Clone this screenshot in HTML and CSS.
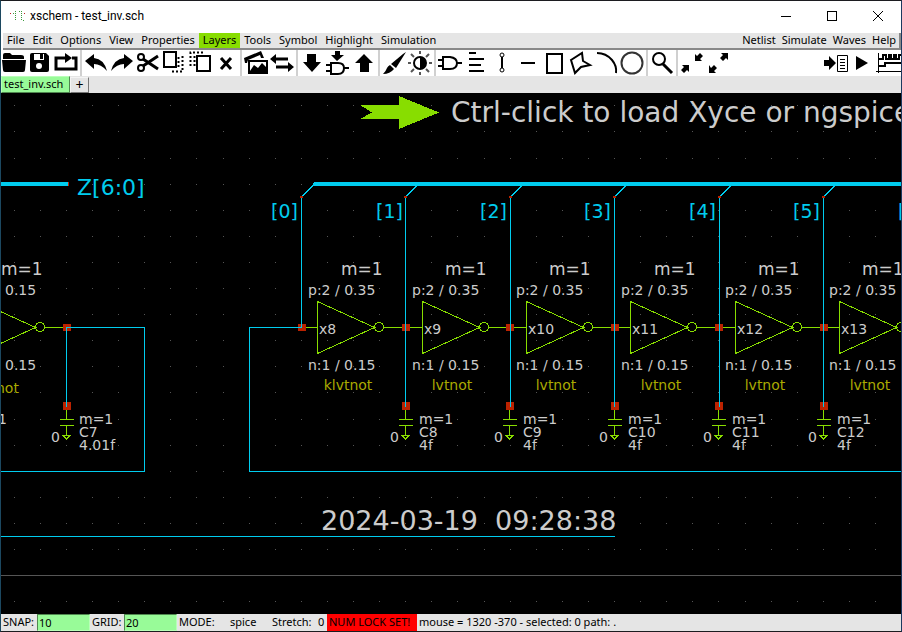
FILE: index.html
```
<!DOCTYPE html>
<html lang="en">
<head>
<meta charset="utf-8">
<title>xschem - test_inv.sch</title>
<link rel="stylesheet" href="styles.css">
</head>
<body>
<div class="window">
  <header class="titlebar">
    <svg class="app-icon" width="18" height="12" viewBox="0 0 18 12" aria-hidden="true">
      <path d="M6.500 1V11M12.500 1V11M4 3.500H7M10 1.500H13M14 10.500H16" class="app-dots"/>
      <path d="M1 3.500H2M15 3.500H16" class="app-pins"/>
    </svg>
    <h1 class="title">xschem - test_inv.sch</h1>
    <div class="window-buttons">
      <button type="button" aria-label="Minimize"><svg width="12" height="12"><path d="M1 6.500H11"/></svg></button>
      <button type="button" aria-label="Maximize"><svg width="12" height="12"><path d="M1.500 1.500H10.500V10.500H1.500Z"/></svg></button>
      <button type="button" aria-label="Close"><svg width="12" height="12"><path class="smooth" d="M1 1L11 11M11 1L1 11"/></svg></button>
    </div>
  </header>

  <nav class="menubar">
    <button type="button">File</button>
    <button type="button">Edit</button>
    <button type="button">Options</button>
    <button type="button">View</button>
    <button type="button">Properties</button>
    <button type="button" class="layers">Layers</button>
    <button type="button">Tools</button>
    <button type="button">Symbol</button>
    <button type="button">Highlight</button>
    <button type="button">Simulation</button>
    <div class="menu-right">
      <button type="button">Netlist</button>
      <button type="button">Simulate</button>
      <button type="button">Waves</button>
      <button type="button">Help</button>
    </div>
  </nav>

  <div class="toolbar">
    <button type="button" aria-label="Open"><svg viewBox="0 0 26 26"><path class="f" d="M2 9V5Q2 3 4 3H9L11 5H20Q23 5 23 7V9ZM1 10H25L24 20Q24 22 22 22H4Q2 22 2 20Z"/></svg></button>
    <button type="button" aria-label="Save"><svg viewBox="0 0 26 26"><path class="f" d="M5 3H19L22 6V20Q22 22 20 22H5Q3 22 3 20V5Q3 3 5 3Z"/><path class="w" d="M7 4H17V10H7Z"/><path class="f" d="M13 4H16V9H13Z"/><circle class="w" cx="12" cy="16" r="3"/></svg></button>
    <button type="button" aria-label="Reload"><svg viewBox="0 0 26 26"><path class="s3" d="M14 8H3V19H23V8H19"/><path class="f" d="M12 3L19 8L12 13Z"/></svg></button>
    <span class="sep"></span>
    <button type="button" aria-label="Undo"><svg viewBox="0 0 26 26"><path class="f" d="M2 11L11 4V8Q21 9 24 21Q18 14 11 14V19Z"/></svg></button>
    <button type="button" aria-label="Redo"><svg viewBox="0 0 26 26"><path class="f" d="M24 11L15 4V8Q5 9 2 21Q8 14 15 14V19Z"/></svg></button>
    <button type="button" aria-label="Cut"><svg viewBox="0 0 26 26"><circle class="s2" cx="6" cy="7" r="3"/><circle class="s2" cx="6" cy="18" r="3"/><path class="s3" d="M8 9L23 19M8 16L23 6"/></svg></button>
    <button type="button" aria-label="Copy"><svg viewBox="0 0 26 26"><path class="s2" d="M3 2H15V17H3Z"/><path class="dots" d="M21.500 6V21.500H9"/><path class="dots" d="M17.500 7V18"/></svg></button>
    <button type="button" aria-label="Paste"><svg viewBox="0 0 26 26"><path class="s2" d="M10 6H23V21H10Z"/><path class="dots" d="M3.500 16V2.500H16"/><path class="dots" d="M7.500 6V17"/></svg></button>
    <button type="button" aria-label="Delete"><svg viewBox="0 0 26 26"><path class="s3" d="M8 8L18 19M18 8L8 19"/></svg></button>
    <span class="sep"></span>
    <button type="button" aria-label="Duplicate view"><svg viewBox="0 0 26 26"><path class="f" d="M1 8L18 1L21 8H18L17 5L5 10L4 13H2Z"/><path class="s2" d="M6 11H24V23H6Z"/><path class="f" d="M7 21L11 15L15 18L19 13L23 17V22H7Z"/></svg></button>
    <button type="button" aria-label="Swap"><svg viewBox="0 0 26 26"><path class="s3" d="M5 9H19M7 17H21"/><path class="f" d="M1 9L7 4V14ZM25 17L19 12V22Z"/></svg></button>
    <span class="sep"></span>
    <button type="button" aria-label="Descend"><svg viewBox="0 0 26 26"><path class="f" d="M8 4H17V12H22L13 22L4 12H8Z"/></svg></button>
    <button type="button" aria-label="Descend symbol"><svg viewBox="0 0 26 26"><path class="f" d="M10 1H15V5H19L12 11L6 5H10Z"/><path class="s2" d="M6 13H13Q19 13 19 18Q19 24 13 24H6ZM1 15H6M1 21H6M19 18H24"/></svg></button>
    <button type="button" aria-label="Ascend"><svg viewBox="0 0 26 26"><path class="f" d="M13 4L22 13H18V22H9V13H4Z"/></svg></button>
    <span class="sep"></span>
    <button type="button" aria-label="Brush"><svg viewBox="0 0 26 26"><path class="f" d="M25 2L15 18L10 14L22 4ZM9 15L13 19Q9 24 2 24Q5 21 6 18Q7 16 9 15Z"/></svg></button>
    <button type="button" aria-label="Toggle colours"><svg viewBox="0 0 26 26"><circle class="s2" cx="13" cy="13" r="6"/><path class="f" d="M13 7A6 6 0 0 1 13 19Z"/><path class="ray" d="M13 1V4M13 22V25M1 13H4M22 13H25M4 4L7 7M19 19L22 22M4 22L7 19M19 7L22 4"/></svg></button>
    <span class="sep"></span>
    <button type="button" aria-label="Insert symbol"><svg viewBox="0 0 26 26"><path class="s2" d="M6 7H13Q20 8 20 13Q20 19 13 19H6ZM1 10H6M1 16H6M20 13H25"/></svg></button>
    <button type="button" aria-label="Insert text"><svg viewBox="0 0 26 26"><path class="s2" d="M6 3H13M6 9H21M6 15H18M6 21H21"/></svg></button>
    <button type="button" aria-label="Insert wire"><svg viewBox="0 0 26 26"><path class="s2" d="M13 7V18"/><circle class="s1" cx="13" cy="5" r="2"/><circle class="s1" cx="13" cy="20" r="2"/></svg></button>
    <button type="button" aria-label="Insert line"><svg viewBox="0 0 26 26"><path class="s2" d="M6 13H20"/></svg></button>
    <button type="button" aria-label="Insert rectangle"><svg viewBox="0 0 26 26"><path class="s2" d="M6 4H21V23H6Z"/></svg></button>
    <button type="button" aria-label="Insert polygon"><svg viewBox="0 0 26 26"><path class="s2" d="M4 10L15 3L16 11L23 15L14 17L8 23Z"/></svg></button>
    <button type="button" aria-label="Insert arc"><svg viewBox="0 0 26 26"><path class="s2" d="M4 3Q13 3 19 10Q24 16 23 23"/></svg></button>
    <button type="button" aria-label="Insert circle"><svg viewBox="0 0 26 26"><circle class="ring" cx="13" cy="13" r="10.500"/></svg></button>
    <span class="sep"></span>
    <button type="button" aria-label="Zoom box"><svg viewBox="0 0 26 26"><circle class="s2" cx="10" cy="9" r="6"/><path class="s3" d="M14 14L23 23"/></svg></button>
    <span class="sep"></span>
    <button type="button" aria-label="Zoom in"><svg viewBox="0 0 26 26"><path class="f" d="M3 15H10V22L8 20L5 23L2 20L5 17ZM16 4V11H23L21 9L24 6L21 3L18 6Z"/></svg></button>
    <button type="button" aria-label="Zoom out"><svg viewBox="0 0 26 26"><path class="f" d="M4 15V23H11L9 21L12 18L9 15L6 18ZM16 3H23V10L21 8L18 11L15 8L18 5Z"/></svg></button>
    <div class="tools-right">
      <button type="button" aria-label="Netlist"><svg viewBox="0 0 26 26"><path class="f" d="M1 10H6V6L13 13L6 20V16H1Z"/><path class="s1" d="M14.500 5.500H24.500V21.500H14.500ZM17 9.500H22M17 12.500H22M17 15.500H22M17 18.500H22"/></svg></button>
      <button type="button" aria-label="Simulate"><svg viewBox="0 0 26 26"><path class="f" d="M7 6L19 13L7 20Z"/></svg></button>
      <button type="button" aria-label="Waves"><svg viewBox="0 0 26 26"><path class="s1" d="M3.500 3V23M1 21.500H26"/><path class="s2" d="M4 9H8V5H11V9H14V5H16V9H19V5H21V9H24V5H26M4 16H10V13H26"/></svg></button>
    </div>
  </div>

  <div class="tabs">
    <button type="button" class="tab active">test_inv.sch</button>
    <button type="button" class="tab add">+</button>
  </div>

  <main class="schematic">
    <svg class="sheet" role="img" aria-label="Schematic test_inv.sch">
      <defs>
        <g id="inverter">
          <path class="sym" d="M-15 26.500H0M.500 .500V52.500L57.500 26.500ZM67 26.500H88"/>
          <circle class="sym" cx="62" cy="26" r="4.500"/>
        </g>
        <g id="pin"><path class="pin" d="M-3 -3H5V4H-3Z"/></g>
        <g id="cap">
          <path class="pin" d="M-3 402H5V410H-3Z"/>
          <path class="sym" d="M.500 410V419M-6 419.500H8M-6 425.500H8M.500 426V435M-3 435.500H4L.500 439Z"/>
          <text class="t14" x="-15" y="442">0</text>
        </g>
        <g id="tap">
          <path class="wire" d="M.500 197V407M1 196.500L12 185.500"/>
          <path class="pin" d="M-1 196H2V198H-1Z"/>
        </g>
        <g id="params">
          <text class="t17" x="40" y="275">m=1</text>
          <text class="t14" x="7" y="295">p:2 / 0.35</text>
          <text class="t14" x="7" y="370">n:1 / 0.15</text>
        </g>
      </defs>

      <!-- Sheet coordinates are window coordinates; the viewport starts at 1,93 -->
      <g transform="translate(-1 -93)">
        <path class="grid" d="M-38 105.500H1500M-38 131.500H1500M-38 158.500H1500M-38 184.500H1500M-38 210.500H1500M-38 236.500H1500M-38 262.500H1500M-38 288.500H1500M-38 314.500H1500M-38 340.500H1500M-38 366.500H1500M-38 392.500H1500M-38 419.500H1500M-38 445.500H1500M-38 471.500H1500M-38 497.500H1500M-38 523.500H1500M-38 549.500H1500M-38 601.500H1500"/>
        <path class="axis" d="M0 575.500H1500"/>

        <path class="arrow" d="M360 105H399V96L439 112.500L399 129V119H360L372 112.500Z"/>
        <text class="t28" x="451" y="122">Ctrl-click to load Xyce or ngspice</text>

        <path class="pin" d="M67 182H69V186H67Z"/>
        <path class="bus" d="M0 182H68V186H0ZM314 182H1500V186H312Z"/>
        <text class="net t22" x="77" y="195">Z[6:0]</text>

        <use href="#inverter" x="-22" y="301"/>
        <use href="#inverter" x="317" y="301"/>
        <use href="#inverter" x="422" y="301"/>
        <use href="#inverter" x="526" y="301"/>
        <use href="#inverter" x="630" y="301"/>
        <use href="#inverter" x="735" y="301"/>
        <use href="#inverter" x="839" y="301"/>

        <use href="#pin" x="66" y="327"/>
        <use href="#pin" x="301" y="327"/>
        <use href="#pin" x="405" y="327"/>
        <use href="#pin" x="509" y="327"/>
        <use href="#pin" x="614" y="327"/>
        <use href="#pin" x="718" y="327"/>
        <use href="#pin" x="823" y="327"/>

        <use href="#cap" x="66"/>
        <use href="#cap" x="405"/>
        <use href="#cap" x="509"/>
        <use href="#cap" x="614"/>
        <use href="#cap" x="718"/>
        <use href="#cap" x="823"/>

        <use href="#tap" x="405"/>
        <use href="#tap" x="510"/>
        <use href="#tap" x="614"/>
        <use href="#tap" x="719"/>
        <use href="#tap" x="823"/>
        <path class="wire" d="M302 196.500L313 185.500M301.500 197V327.500H249.500V471.500H1500"/>
        <path class="pin" d="M300 196H303V198H300Z"/>
        <path class="wire" d="M66.500 407V327.500H144.500V471.500H0M0 536.500H615"/>

        <text class="net t19" x="271" y="218">[0]</text>
        <text class="net t19" x="376" y="218">[1]</text>
        <text class="net t19" x="480" y="218">[2]</text>
        <text class="net t19" x="584" y="218">[3]</text>
        <text class="net t19" x="689" y="218">[4]</text>
        <text class="net t19" x="793" y="218">[5]</text>
        <text class="net t19" x="898" y="218">[6]</text>

        <text class="t17" x="1" y="275">m=1</text>
        <text class="t14" x="5" y="295">0.15</text>
        <text class="t14" x="5" y="370">0.15</text>
        <use href="#params" x="301"/>
        <use href="#params" x="405"/>
        <use href="#params" x="509"/>
        <use href="#params" x="614"/>
        <use href="#params" x="718"/>
        <use href="#params" x="822"/>

        <text class="t14" x="319" y="334">x8</text>
        <text class="t14" x="424" y="334">x9</text>
        <text class="t14" x="528" y="334">x10</text>
        <text class="t14" x="632" y="334">x11</text>
        <text class="t14" x="737" y="334">x12</text>
        <text class="t14" x="841" y="334">x13</text>

        <text class="model t14" x="-4" y="393">not</text>
        <text class="model t14 mid" x="348" y="390">klvtnot</text>
        <text class="model t14 mid" x="452" y="390">lvtnot</text>
        <text class="model t14 mid" x="556" y="390">lvtnot</text>
        <text class="model t14 mid" x="661" y="390">lvtnot</text>
        <text class="model t14 mid" x="765" y="390">lvtnot</text>
        <text class="model t14 mid" x="870" y="390">lvtnot</text>

        <text class="t14" x="-2" y="424">1</text>
        <text class="t14"><tspan x="79" y="424">m=1</tspan><tspan x="79" y="437">C7</tspan><tspan x="79" y="450">4.01f</tspan></text>
        <text class="t14"><tspan x="419" y="424">m=1</tspan><tspan x="419" y="437">C8</tspan><tspan x="419" y="450">4f</tspan></text>
        <text class="t14"><tspan x="523" y="424">m=1</tspan><tspan x="523" y="437">C9</tspan><tspan x="523" y="450">4f</tspan></text>
        <text class="t14"><tspan x="628" y="424">m=1</tspan><tspan x="628" y="437">C10</tspan><tspan x="628" y="450">4f</tspan></text>
        <text class="t14"><tspan x="732" y="424">m=1</tspan><tspan x="732" y="437">C11</tspan><tspan x="732" y="450">4f</tspan></text>
        <text class="t14"><tspan x="837" y="424">m=1</tspan><tspan x="837" y="437">C12</tspan><tspan x="837" y="450">4f</tspan></text>

        <text class="t27" x="321" y="530">2024-03-19&#160; 09:28:38</text>
      </g>
    </svg>
  </main>

  <footer class="statusbar">
    <label for="snap">SNAP:</label>
    <input id="snap" type="text" value="10">
    <label for="grid">GRID:</label>
    <input id="grid" type="text" value="20">
    <span class="mode">MODE:</span>
    <span class="mode-value">spice</span>
    <span class="stretch">Stretch:</span>
    <span class="stretch-value">0</span>
    <span class="numlock">NUM LOCK SET!</span>
    <span class="message">mouse = 1320 -370 - selected: 0 path: .</span>
  </footer>
</div>
</body>
</html>
```
FILE: styles.css
```
* {
  box-sizing: border-box;
}

body {
  margin: 0;
  font: 11px/13px "Noto Sans", "Open Sans", sans-serif;
  color: #000;
}

button {
  margin: 0;
  padding: 0;
  border: 0;
  background: none;
  font: inherit;
  color: inherit;
}

.window {
  display: flex;
  flex-direction: column;
  height: 100vh;
  border: 1px solid #1c1c20;
  border-left-color: #1c4860;
  border-right-color: #1c3a60;
  background: #fff;
  overflow: hidden;
}

/* Title bar */
.titlebar {
  display: flex;
  align-items: center;
  flex: none;
  height: 32px;
  padding: 0 0 2px 8px;
}

.app-icon {
  flex: none;
  margin-right: 3px;
  shape-rendering: crispEdges;
}

.app-dots {
  stroke: #3a9a3a;
  stroke-dasharray: 1 1;
}

.app-pins {
  stroke: #c02020;
}

.title {
  flex: 1;
  margin: 0;
  font: 12px/16px Roboto, "Open Sans", sans-serif;
}

.window-buttons {
  display: flex;
}

.window-buttons button {
  display: grid;
  place-items: center;
  width: 46px;
  height: 30px;
}

.window-buttons path {
  fill: none;
  stroke: #000;
  shape-rendering: crispEdges;
}

.window-buttons .smooth {
  shape-rendering: auto;
}

/* Menu bar */
.menubar {
  display: flex;
  flex: none;
  height: 17px;
  margin-left: 2px;
  border-right: 2px solid #888;
  border-bottom: 2px solid #888;
  background: #e5e5e5;
}

.menubar button {
  padding: 0 4px 2px;
}

.menubar .layers {
  background: #88dd00;
}

.menu-right {
  display: flex;
  margin-left: auto;
}

.menu-right button {
  padding: 0 3px 2px;
}

/* Toolbar */
.toolbar {
  display: flex;
  flex: none;
  height: 26px;
  background: #fff;
}

.toolbar button,
.toolbar svg {
  display: block;
  flex: none;
  width: 26px;
  height: 26px;
}

.sep {
  flex: none;
  width: 2px;
  margin: 0 1px;
  background: #d0d0d0;
}

.tools-right {
  display: flex;
  margin-left: auto;
}

.f {
  fill: #000;
}

.w {
  fill: #fff;
}

.s1,
.s2,
.s3,
.ring,
.ray,
.dots {
  fill: none;
  stroke: #000;
}

.s2 {
  stroke-width: 2;
}

.s3 {
  stroke-width: 3;
}

.ring {
  stroke: #333;
  stroke-width: 2;
}

.ray {
  stroke: #555;
  stroke-width: 2;
}

.dots {
  stroke-width: 2;
  stroke-dasharray: 2 2;
}

/* Tabs */
.tabs {
  display: flex;
  align-items: flex-end;
  flex: none;
  height: 17px;
  background: #e5e5e5;
}

.tab {
  height: 17px;
  padding: 0 2px 2px;
  border: 1px solid #f4f4f4;
  border-right-color: #777;
  border-bottom-color: #777;
}

.tab.active {
  width: 69px;
  border-color: #b8ffb8 #508850 #508850 #b8ffb8;
  background: #98fb98;
  text-align: left;
}

.tab.add {
  width: 19px;
  height: 16px;
  font-size: 14px;
}

/* Drawing area */
.schematic {
  flex: 1;
  min-height: 0;
  background: #000;
}

.sheet {
  display: block;
  width: 100%;
  height: 100%;
  font-family: "DejaVu Sans", sans-serif;
}

.sheet path,
.sheet circle {
  fill: none;
  shape-rendering: crispEdges;
}

.sheet text {
  fill: #ccc;
}

.sheet .grid {
  stroke: #555;
  stroke-dasharray: 1 25 1 25 1 25 1 25 1 25 1 25 1 25 1 25 1 25 1 26;
}

.sheet .axis {
  stroke: #555;
}

.sheet .wire {
  stroke: #00ccee;
}

.sheet .bus,
.sheet .net {
  fill: #00ccee;
}

.sheet .sym {
  stroke: #88dd00;
}

.sheet .arrow {
  fill: #88dd00;
}

.sheet .pin {
  fill: #bb2200;
}

.sheet .model {
  fill: #aaaa00;
}

.t14 {
  font-size: 14px;
}

.t17 {
  font-size: 17px;
}

.t19 {
  font-size: 19px;
}

.t22 {
  font-size: 22px;
}

.t27 {
  font-size: 27px;
}

.t28 {
  font-size: 28px;
}

.mid {
  text-anchor: middle;
}

/* Status bar */
.statusbar {
  display: flex;
  flex: none;
  height: 17px;
  padding-left: 2px;
  background: #e5e5e5;
  line-height: 15px;
  white-space: nowrap;
}

.statusbar label {
  width: 34px;
}

.statusbar input {
  width: 53px;
  height: 17px;
  margin-right: 2px;
  padding: 0 1px 1px;
  border: 1px solid #508850;
  border-right-color: #b8ffb8;
  border-bottom-color: #b8ffb8;
  border-radius: 0;
  background: #98fb98;
  font: inherit;
}

.statusbar label + input + label {
  width: 32px;
}

.mode {
  width: 51px;
}

.mode-value {
  width: 42px;
}

.stretch {
  width: 46px;
}

.stretch-value {
  width: 9px;
}

.numlock {
  width: 90px;
  padding-left: 2px;
  background: #f00;
}

.message {
  padding-left: 2px;
}
```
